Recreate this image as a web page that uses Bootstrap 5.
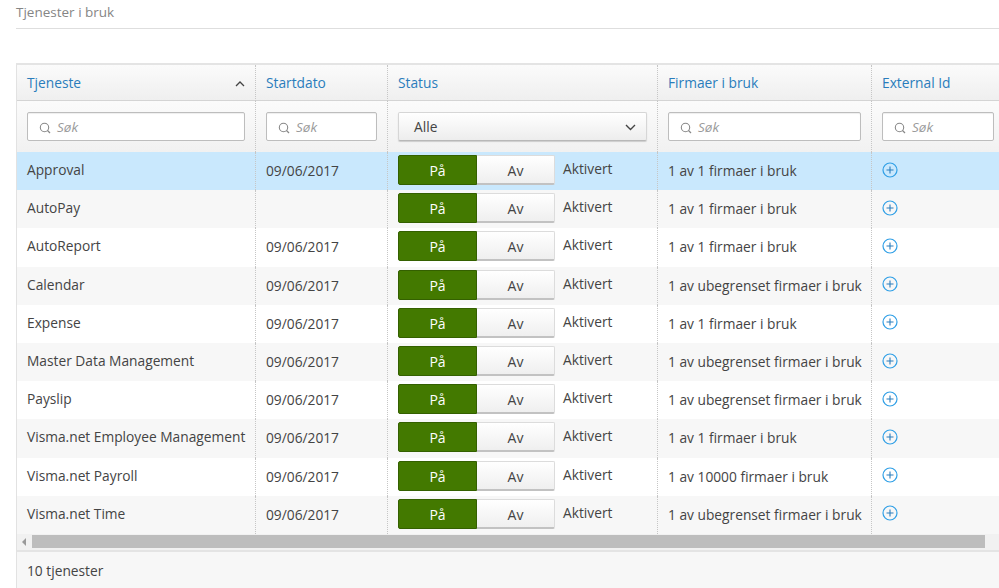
<!DOCTYPE html>
<html lang="no">
<head>
<meta charset="utf-8">
<title>Tjenester i bruk</title>
<link href="https://cdn.jsdelivr.net/npm/bootstrap@5.3.0/dist/css/bootstrap.min.css" rel="stylesheet">
<style>
html,body{height:588px;overflow:hidden;background:#fff}
body{font-family:"Open Sans","Liberation Sans",sans-serif;font-size:13.75px;color:#444}
.page-head{margin-left:16px;height:29px;border-bottom:1px solid #dedede;color:#858585;font-size:13.5px;line-height:24px}
.grid-wrap{margin:34px 0 0 16px;border-left:1px solid #e2e2e2;border-top:2px solid #e4e4e4;width:983px;overflow:hidden}
.svc-table{table-layout:fixed;width:988px;margin:0;border-collapse:separate;border-spacing:0}
.svc-table th,.svc-table td{padding:0 10px;border-width:0 1px 0 0;border-style:dotted;border-color:#c6c6c6;font-weight:400;vertical-align:middle;white-space:nowrap;box-shadow:none;background:transparent;color:#444}
.svc-table .head-row th{height:36px;background:linear-gradient(#fbfbfb,#efefef);border-bottom:1px solid #d4d4d4;border-bottom-style:solid;color:#2a7dbc;padding-top:2px}
.svc-table .filter-row th{height:51px;background:linear-gradient(#fbfbfb,#f1f1f1)}
.svc-table tbody td{height:38.2px;line-height:20px}
.svc-table tbody tr:nth-child(even) td{background:#f7f7f7}
.svc-table tbody tr.row-active td{background:#c9e8fd}
.sort-cell{display:flex;justify-content:space-between;align-items:center}
.search-box{display:flex;align-items:center;gap:6px;height:29px;background:#fff;border:1px solid #bdbdbd;border-radius:2px;padding:2px 0 0 11px;color:#9a9a9a;font-style:italic;font-size:13.5px;box-shadow:inset 0 1px 1px #eee}
.status-select{display:flex;justify-content:space-between;align-items:center;height:29px;padding:2px 10px 0 15px;background:linear-gradient(#fff,#ededed);border:1px solid #d6d6d6;border-bottom-color:#b8b8b8;border-radius:2px;color:#444;font-size:13.75px;box-shadow:0 1px 1px #ccc}
.toggle-cell{display:flex;align-items:center;gap:8px;margin-top:-2px}
.toggle-pair{display:flex;width:157px;height:30px;font-size:14px;line-height:29px;text-align:center}
.tog-on{width:79px;background:#437900;border:1px solid #346000;color:#fff;border-radius:2px 0 0 2px}
.tog-off{width:78px;background:linear-gradient(#fff,#efefef);border:1px solid #dcdcdc;border-bottom:2px solid #c2c2c2;border-left:0;color:#444;border-radius:0 2px 2px 0}
.status-text{margin-top:-2px}
.plus-ico{display:block;margin-top:-3px}
.name-text{position:relative;top:-1px}
.h-scroll{height:16px;background:#f1f1f1;display:flex;align-items:center}
.scroll-arrow{width:15px;display:flex;justify-content:center}
.scroll-thumb{width:953px;height:13px;background:#bdbdbd}
.grid-foot{height:38px;background:#f7f7f7;border-top:2px solid #e4e4e4;padding:9px 10px 0;line-height:20px;color:#444}
</style>
</head>
<body>
<div class="page-head">Tjenester i bruk</div>
<div class="grid-wrap">
<table class="table svc-table">
<colgroup><col style="width:239px"><col style="width:132px"><col style="width:270px"><col style="width:214px"><col style="width:133px"></colgroup>
<thead>
<tr class="head-row">
<th><div class="sort-cell">Tjeneste <svg width="10" height="6" viewBox="0 0 10 6"><path d="M1 5l4-4 4 4" fill="none" stroke="#444" stroke-width="1.3"/></svg></div></th>
<th>Startdato</th><th>Status</th><th>Firmaer i bruk</th><th>External Id</th>
</tr>
<tr class="filter-row">
<th><div class="search-box"><svg width="12" height="12" viewBox="0 0 12 12"><circle cx="5.5" cy="5.5" r="4.2" fill="none" stroke="#888" stroke-width="1.1"/><path d="M8.5 8.5l2.5 2.5" stroke="#888" stroke-width="1.3"/></svg>Søk</div></th>
<th><div class="search-box"><svg width="12" height="12" viewBox="0 0 12 12"><circle cx="5.5" cy="5.5" r="4.2" fill="none" stroke="#888" stroke-width="1.1"/><path d="M8.5 8.5l2.5 2.5" stroke="#888" stroke-width="1.3"/></svg>Søk</div></th>
<th><div class="status-select">Alle <svg width="11" height="7" viewBox="0 0 11 7"><path d="M1 1l4.5 4.5L10 1" fill="none" stroke="#444" stroke-width="1.4"/></svg></div></th>
<th><div class="search-box"><svg width="12" height="12" viewBox="0 0 12 12"><circle cx="5.5" cy="5.5" r="4.2" fill="none" stroke="#888" stroke-width="1.1"/><path d="M8.5 8.5l2.5 2.5" stroke="#888" stroke-width="1.3"/></svg>Søk</div></th>
<th><div class="search-box"><svg width="12" height="12" viewBox="0 0 12 12"><circle cx="5.5" cy="5.5" r="4.2" fill="none" stroke="#888" stroke-width="1.1"/><path d="M8.5 8.5l2.5 2.5" stroke="#888" stroke-width="1.3"/></svg>Søk</div></th>
</tr>
</thead>
<tbody id="rows"></tbody>
</table>
<div class="h-scroll"><div class="scroll-arrow"><svg width="5" height="8" viewBox="0 0 5 8"><path d="M4 0v8L0 4z" fill="#999"/></svg></div><div class="scroll-thumb"></div></div>
<div class="grid-foot">10 tjenester</div>
</div>
<script>
var data=[["Approval","09/06/2017","1 av 1 firmaer i bruk"],["AutoPay","","1 av 1 firmaer i bruk"],["AutoReport","09/06/2017","1 av 1 firmaer i bruk"],["Calendar","09/06/2017","1 av ubegrenset firmaer i bruk"],["Expense","09/06/2017","1 av 1 firmaer i bruk"],["Master Data Management","09/06/2017","1 av ubegrenset firmaer i bruk"],["Payslip","09/06/2017","1 av ubegrenset firmaer i bruk"],["Visma.net Employee Management","09/06/2017","1 av 1 firmaer i bruk"],["Visma.net Payroll","09/06/2017","1 av 10000 firmaer i bruk"],["Visma.net Time","09/06/2017","1 av ubegrenset firmaer i bruk"]];
document.getElementById("rows").innerHTML=data.map(function(r,i){return '<tr'+(i==0?' class="row-active"':'')+'><td><span class="name-text">'+r[0]+'</span></td><td>'+r[1]+'</td><td><div class="toggle-cell"><div class="toggle-pair"><div class="tog-on">På</div><div class="tog-off">Av</div></div><span class="status-text">Aktivert</span></div></td><td>'+r[2]+'</td><td><svg class="plus-ico" width="16" height="16" viewBox="0 0 16 16"><circle cx="8" cy="8" r="7" fill="none" stroke="#2f9fe6" stroke-width="1.2"/><path d="M8 4.5v7M4.5 8h7" stroke="#2a7dbc" stroke-width="1.1"/></svg></td></tr>'}).join("");
</script>
<script src="https://cdn.jsdelivr.net/npm/bootstrap@5.3.0/dist/js/bootstrap.bundle.min.js"></script>
</body>
</html>
